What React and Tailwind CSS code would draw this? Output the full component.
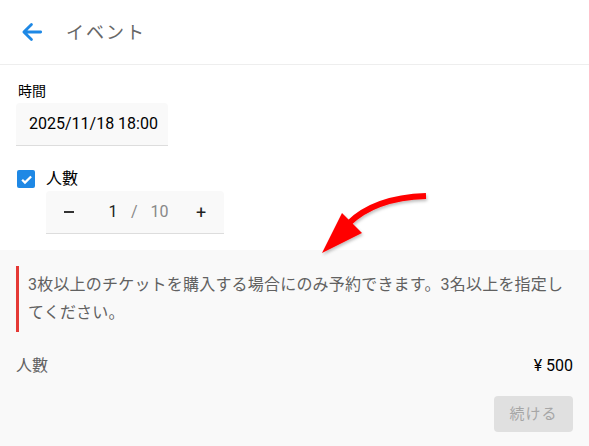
import React from 'react';

export default function App() {
  return (
    <div
      className="relative w-[589px] h-[446px] bg-white overflow-hidden"
      style={{ fontFamily: 'Roboto, "Noto Sans CJK JP", sans-serif' }}
    >
      {/* Header */}
      <header className="h-[65px] flex items-center border-b border-[#eeeeee] pl-[19px]">
        <svg width="26" height="26" viewBox="0 0 24 24" className="text-[#1e88e5]">
          <path d="M20 12H5M11.5 5L4.5 12l7 7" stroke="currentColor" strokeWidth="2.6" strokeLinecap="round" strokeLinejoin="round" fill="none" />
        </svg>
        <span className="ml-[21px] text-[18px] text-[#666666] tracking-[2px]">イベント</span>
      </header>

      {/* Form */}
      <div className="pl-[16px] pt-[16px] h-[185px]">
        <div className="text-[14px] text-black leading-[20px] pl-[2px]">時間</div>
        <div className="mt-[2px] w-[152px] h-[43px] bg-[#f9f9f9] rounded-t-[4px] border-b border-[#dddddd] flex items-center pl-[13px] text-[16px] text-black">
          2025/11/18 18:00
        </div>

        <div className="mt-[24px] flex items-center h-[18px]">
          <div className="w-[18px] h-[18px] ml-[1px] rounded-[2px] bg-[#1e88e5] flex items-center justify-center">
            <svg width="13" height="13" viewBox="0 0 24 24">
              <path d="M4 12.5l5.2 5.2L20.5 6.5" stroke="white" strokeWidth="4.2" fill="none" />
            </svg>
          </div>
          <span className="ml-[11px] text-[16px] text-black">人數</span>
        </div>
        <div className="mt-[3px] ml-[30px] w-[178px] h-[43px] bg-[#f9f9f9] rounded-t-[4px] border-b border-[#dddddd] flex items-center text-[16px]">
          <span className="w-[46px] flex justify-center">
            <span className="w-[10px] h-[2px] bg-[#333]"></span>
          </span>
          <span className="ml-[14px] w-[14px] text-center text-[#222]">1</span>
          <span className="ml-[11px] text-[#888]">/</span>
          <span className="ml-[13px] text-[#888]">10</span>
          <span className="ml-auto w-[46px] text-center text-[#222] text-[18px]">+</span>
        </div>
      </div>

      {/* Info panel */}
      <div className="bg-[#f9f9f9] h-[196px] pt-[16px] px-[16px]">
        <div className="border-l-[3px] border-[#e53935] pl-[9px] pr-[2px] py-[5px] text-[16px] leading-[28px] text-[#616161] tracking-[0.2px]">
          3枚以上のチケットを購入する場合にのみ予約できます。3名以上を指定してください。
        </div>
        <div className="mt-[22px] flex items-center justify-between h-[24px]">
          <span className="text-[16px] text-[#616161]">人數</span>
          <span className="text-[16px] text-black">¥ 500</span>
        </div>
        <div className="mt-[18px] flex justify-end">
          <button className="w-[79px] h-[36px] rounded-[4px] bg-[#e0e0e0] text-[15px] text-[#a6a6a6] tracking-[1px]">
            続ける
          </button>
        </div>
      </div>

      {/* Annotation arrow */}
      <svg
        className="absolute left-[300px] top-[180px]"
        width="140"
        height="90"
        viewBox="300 180 140 90"
      >
        <defs>
          <filter id="sh" x="-20%" y="-20%" width="140%" height="140%">
            <feDropShadow dx="1" dy="2" stdDeviation="1.5" floodColor="#000" floodOpacity="0.25" />
          </filter>
        </defs>
        <g filter="url(#sh)">
          <path d="M426 196 C395 197 368 204 348 224" stroke="#ff0000" strokeWidth="6" fill="none" />
          <polygon points="342,213 362,233 322,253" fill="#ff0000" />
        </g>
      </svg>
    </div>
  );
}
